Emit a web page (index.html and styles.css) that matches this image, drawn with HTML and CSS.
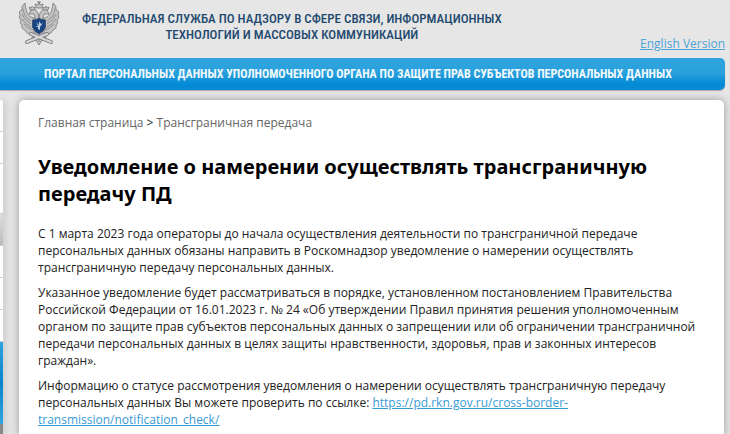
FILE: index.html
```html
<!DOCTYPE html>
<html lang="ru">
<head>
<meta charset="utf-8">
<title>Портал персональных данных</title>
<link rel="stylesheet" href="styles.css">
</head>
<body>
<header class="header">
  <svg class="emblem" viewBox="0 0 42 46" aria-hidden="true">
    <g fill="#c4c4c5" stroke="#77777b" stroke-width=".8" stroke-linejoin="round">
      <path d="M17 18C11 18 8 13 7 3Q3 6 4 10Q0 11 2 15Q0 18 3 20Q1 23 4 25Q3 29 7 30Q9 35 15 34L18 29Z"/>
      <path d="M25 18C31 18 34 13 35 3Q39 6 38 10Q42 11 40 15Q42 18 39 20Q41 23 38 25Q39 29 35 30Q33 35 27 34L24 29Z"/>
      <path d="M17 28L25 28L29 41L24 40L21 45L18 40L13 41Z"/>
      <path d="M18 21L16 14L11 14L13 10L17 9L20 13L21 18L22 13L25 9L29 10L31 14L26 14L24 21Z"/>
      <path d="M18 8L17 4L20 5L21 2L22 5L25 4L24 8Z"/>
      <path d="M12 10L11 7L13 8L14 6L16 8L17 7L16 10ZM25 10L25 7L27 8L28 6L29 8L31 7L30 10Z"/>
    </g>
    <g fill="none" stroke="#808084" stroke-width=".8">
      <path d="M5 9Q6 17 13 21M4 14Q6 20 13 24M4 19Q7 24 13 27M6 24Q9 28 15 30M37 9Q36 17 29 21M38 14Q36 20 29 24M38 19Q35 24 29 27M36 24Q33 28 27 30M18 32L16 38M21 33V42M24 32L26 38M21 1V4M19 2H23"/>
    </g>
    <path d="M9 42L29 34M33 42L13 34" stroke="#77777b" stroke-width="4" stroke-linecap="round"/>
    <path d="M9 42L29 34M33 42L13 34" stroke="#d6d6d7" stroke-width="2.4" stroke-linecap="round"/>
    <path d="M14.500 20Q19 20 21 18Q23 20 27.500 20V27Q26.500 31 21 34Q15.500 31 14.500 27Z" fill="#174482" stroke="#45536c"/>
    <path d="M18 22L21 25V21L23 24L25 23L22 27L22 30L20 29L20 27L17 26L20 26Z" fill="#b9cade"/>
  </svg>
  <p class="agency">Федеральная служба по надзору в сфере связи, информационных<br>технологий и массовых коммуникаций</p>
  <a class="language" href="#">English Version</a>
</header>
<div class="portal">Портал персональных данных уполномоченного органа по защите прав субъектов персональных данных</div>
<div class="columns">
  <nav class="sidebar" aria-label="Разделы">
    <div class="item"></div>
    <div class="item"></div>
    <div class="item item-tall"></div>
    <div class="item item-active"></div>
    <div class="item"></div>
    <div class="item"></div>
    <div class="item"></div>
    <div class="banner"></div>
    <div class="banner-end"></div>
  </nav>
  <main class="content">
    <nav class="breadcrumbs"><a href="#">Главная страница</a> &gt; <a href="#">Трансграничная передача</a></nav>
    <h1>Уведомление о намерении осуществлять трансграничную передачу ПД</h1>
    <p>С 1 марта 2023 года операторы до начала осуществления деятельности по трансграничной передаче персональных данных обязаны направить в Роскомнадзор уведомление о намерении осуществлять трансграничную передачу персональных данных.</p>
    <p>Указанное уведомление будет рассматриваться в порядке, установленном постановлением Правительства Российской Федерации от 16.01.2023 г. № 24 «Об утверждении Правил принятия решения уполномоченным органом по защите прав субъектов персональных данных о запрещении или об ограничении трансграничной передачи персональных данных в целях защиты нравственности, здоровья, прав и законных интересов граждан».</p>
    <p>Информацию о статусе рассмотрения уведомления о намерении осуществлять трансграничную передачу персональных данных Вы можете проверить по ссылке: <a class="link" href="#">https://pd.rkn.gov.ru/cross-border-transmission/notification_check/</a></p>
  </main>
</div>
</body>
</html>
```
FILE: styles.css
```css
* {
  box-sizing: border-box;
}

body {
  margin: 0;
  min-height: 100vh;
  display: flex;
  flex-direction: column;
  padding-right: 5px;
  background: #e6e6e6;
  color: #222;
  font: 12px/17px "Open Sans", "Noto Sans", sans-serif;
}

.header {
  display: flex;
  align-items: flex-start;
  height: 58px;
  padding-left: 18px;
}

.emblem {
  flex: none;
  width: 42px;
  height: 46px;
}

.agency {
  margin: 11px 0 0 22px;
  color: #23496f;
  font: 500 13px/16px "Liberation Sans Narrow", "Roboto Condensed", "Open Sans Condensed", sans-serif;
  text-align: center;
  text-transform: uppercase;
  white-space: nowrap;
}

.language {
  margin: 35px 0 0 auto;
  color: #4da3d8;
  white-space: nowrap;
}

.portal {
  height: 32px;
  padding-left: 44px;
  border-radius: 0 5px 5px 0;
  background: linear-gradient(#2ea5df, #2aa1dc 45%, #058bd6 80%, #058bd6);
  box-shadow: 0 1px 1px #aaa;
  color: #f2f9fd;
  font: bold 12px/32px "Liberation Sans Narrow", "Roboto Condensed", "Open Sans Condensed", sans-serif;
  text-transform: uppercase;
  white-space: nowrap;
}

.columns {
  flex: 1;
  display: flex;
  gap: 16px;
  padding: 10px 1px 0 0;
}

.sidebar {
  flex: none;
  width: 3px;
  border-radius: 0 4px 0 0;
  background: #fff;
  box-shadow: 0 0 8px #999;
}

.item {
  height: 32px;
  border-bottom: 1px solid #ccc;
}

.item-tall {
  height: 50px;
}

.item-active {
  background: linear-gradient(#ddd, #bbb);
}

.banner {
  height: 82px;
  background: linear-gradient(#2ea5df, #0c82cc 50%, #2ea5df);
}

.banner-end {
  height: 10px;
  background: #888;
}

.content {
  flex: 1;
  min-width: 0;
  padding: 14px 16px 0 19px;
  border-radius: 5px 5px 0 0;
  background: #fff;
  box-shadow: 0 0 9px #999;
}

.breadcrumbs {
  margin-bottom: 22px;
}

.breadcrumbs a {
  color: #666;
  text-decoration: none;
}

h1 {
  margin: 0 0 18px;
  color: #000;
  font: bold 20px/27px "Noto Sans", "Open Sans", sans-serif;
}

.content p {
  margin: 0 0 8px;
}

.link {
  color: #389bd5;
}
```
